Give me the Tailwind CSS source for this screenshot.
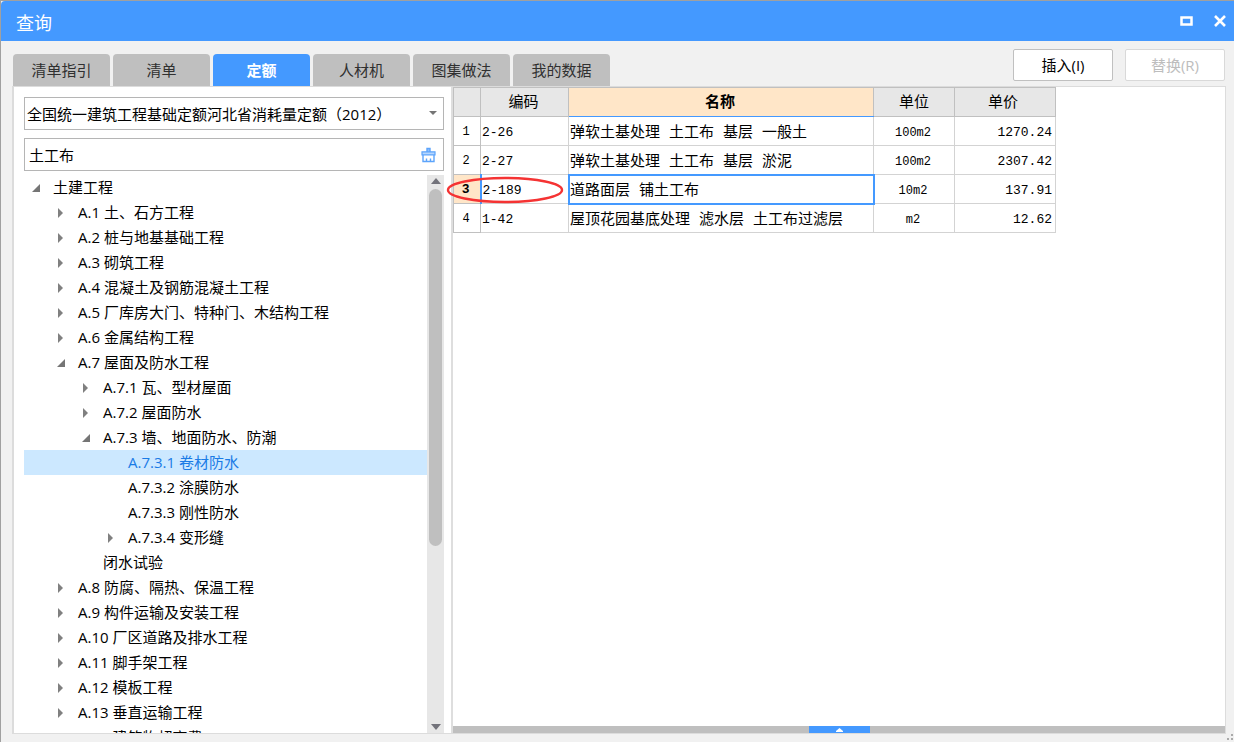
<!DOCTYPE html>
<html lang="zh-CN">
<head>
<meta charset="utf-8">
<title>查询</title>
<script src="https://cdn.jsdelivr.net/npm/@tailwindcss/browser@4"></script>
</head>
<body class="flex h-screen flex-col overflow-hidden border-t border-l border-[#a0a0a0] bg-[#f1f1f1] font-['Open_Sans','Noto_Sans_CJK_SC',sans-serif] text-[15px] leading-6 text-black">
<header class="flex h-10 shrink-0 items-center rounded-tl bg-[#4499ff] pr-1 pl-[15px] text-white">
  <h1 class="flex-1 pt-1 text-lg">查询</h1>
  <button aria-label="最大化" class="p-1"><svg class="block" width="14" height="10" viewBox="0 0 14 10"><path d="M1.500 1.500h10v7h-10z" fill="none" stroke="#fff" stroke-width="2.500"/></svg></button>
  <button aria-label="关闭" class="ml-3 p-1"><svg class="block" width="12" height="12" viewBox="0 0 12 12"><path d="M1 1l10 10M11 1L1 11" fill="none" stroke="#fff" stroke-width="2.600"/></svg></button>
</header>

<div class="flex shrink-0 items-end pt-2 pr-[9px] pl-3">
  <div role="tablist" class="flex flex-1 gap-[3px] text-[#303030]">
    <button role="tab" class="h-8 w-[97px] rounded-t-sm bg-[#bfbfbf]">清单指引</button>
    <button role="tab" class="h-8 w-[97px] rounded-t-sm bg-[#bfbfbf]">清单</button>
    <button role="tab" aria-selected="true" class="h-8 w-[97px] rounded-t-sm bg-[#4499ff] font-bold text-white">定额</button>
    <button role="tab" class="h-8 w-[97px] rounded-t-sm bg-[#bfbfbf]">人材机</button>
    <button role="tab" class="h-8 w-[97px] rounded-t-sm bg-[#bfbfbf]">图集做法</button>
    <button role="tab" class="h-8 w-[97px] rounded-t-sm bg-[#bfbfbf]">我的数据</button>
  </div>
  <div class="mb-[5px] flex gap-3">
    <button class="h-8 w-[100px] rounded-xs border border-[#c0c0c0] bg-white">插入(I)</button>
    <button disabled class="h-8 w-[100px] rounded-xs border border-[#d9d9d9] bg-white text-[#bdbdbd]">替换(R)</button>
  </div>
</div>

<main class="mr-2 mb-2 ml-[11px] flex min-h-0 flex-1 border border-l-2 border-[#dcdcdc] bg-white">
  <section class="flex w-[439px] shrink-0 flex-col border-r-2 border-[#dedede] pt-[10px] pr-[7px] pl-[10px]">
    <div class="relative shrink-0">
      <select aria-label="定额库" class="h-[33px] w-full appearance-none border border-[#b5b5b5] bg-white pt-px pl-[2px]">
        <option>全国统一建筑工程基础定额河北省消耗量定额（2012）</option>
      </select>
      <svg class="pointer-events-none absolute top-[14px] right-[7px]" width="8" height="4" viewBox="0 0 8 4"><path d="M0 0h8L4 4z" fill="#757575"/></svg>
    </div>
    <div class="mt-2 flex h-[33px] shrink-0 items-center border border-[#b5b5b5] pr-[7px]">
      <input aria-label="搜索" value="土工布" class="h-full min-w-0 flex-1 pl-1 outline-none">
      <button aria-label="清除"><svg class="block" width="15" height="16" viewBox="0 0 15 16" fill="none" stroke="#5ca4fb"><path d="M6 5V1.500h3V5" fill="#8fc0ff" stroke-width="1.400"/><path d="M1 4.800h13v3H1z" fill="#b5d6ff" stroke-width="1.200"/><path d="M2 8v6.500h11V8M5.500 14v-2.500M9.500 14v-2.500" stroke-width="1.400"/></svg></button>
    </div>
    <div class="mt-1 flex min-h-0 flex-1">
      <ul role="tree" id="tree" class="min-w-0 flex-1 overflow-hidden whitespace-nowrap"></ul>
      <div class="flex w-[17px] shrink-0 flex-col items-center bg-[#e7e7e7]">
        <svg class="mt-[3px] mb-1 shrink-0" width="10" height="6" viewBox="0 0 10 6"><path d="M0 6h10L5 0z" fill="#73737b"/></svg>
        <div class="mt-px h-[64%] w-[13px] rounded-full bg-[#bfbfbf]"></div>
        <svg class="mt-auto mb-[3px] shrink-0" width="10" height="6" viewBox="0 0 10 6"><path d="M0 0h10L5 6z" fill="#73737b"/></svg>
      </div>
    </div>
  </section>

  <section class="flex min-w-0 flex-1 flex-col">
    <div class="relative flex-1">
      <table class="w-[602px] table-fixed border-collapse font-['Liberation_Mono','Noto_Sans_CJK_SC',monospace] leading-5">
        <colgroup><col class="w-[27px]"><col class="w-[88px]"><col class="w-[305px]"><col class="w-[81px]"><col class="w-[101px]"></colgroup>
        <thead>
          <tr class="h-[29px] bg-[#e7e7e7]">
            <th class="border border-[#c0c0c0]"></th>
            <th class="border border-[#c0c0c0] pt-1 pr-[2px] font-normal">编码</th>
            <th class="border border-[#c0c0c0] border-b-[#4499ff] bg-[#ffe6c8] pt-1 pr-[2px] font-bold">名称</th>
            <th class="border border-[#c0c0c0] pt-1 font-normal">单位</th>
            <th class="border border-[#c0c0c0] pt-1 pr-1 font-normal">单价</th>
          </tr>
        </thead>
        <tbody>
          <tr class="h-[29px]">
            <td class="border border-[#c0c0c0] pt-px pr-[2px] text-center text-xs">1</td>
            <td class="border border-[#d3d3d3] pt-[3px] pl-px text-[13px]">2-26</td>
            <td class="border border-[#d3d3d3] pt-[5px] pl-px whitespace-nowrap">弹软土基处理 土工布 基层 一般土</td>
            <td class="border border-[#d3d3d3] pt-[3px] pr-[2px] text-center text-xs">100m2</td>
            <td class="border border-[#d3d3d3] pt-[3px] pr-[3px] text-right text-[13px]">1270.24</td>
          </tr>
          <tr class="h-[29px]">
            <td class="border border-[#c0c0c0] pt-px pr-[2px] text-center text-xs">2</td>
            <td class="border border-[#d3d3d3] pt-[3px] pl-px text-[13px]">2-27</td>
            <td class="border border-[#d3d3d3] pt-[5px] pl-px whitespace-nowrap">弹软土基处理 土工布 基层 淤泥</td>
            <td class="border border-[#d3d3d3] pt-[3px] pr-[2px] text-center text-xs">100m2</td>
            <td class="border border-[#d3d3d3] pt-[3px] pr-[3px] text-right text-[13px]">2307.42</td>
          </tr>
          <tr class="h-[29px]">
            <td class="border border-r-2 border-[#c0c0c0] border-r-[#4499ff] bg-[#ffe6c8] pt-px pr-[2px] text-center text-[13px] font-bold">3</td>
            <td class="border border-[#d3d3d3] pt-[3px] pl-px text-[13px]">2-189</td>
            <td class="border border-[#d3d3d3] pt-[5px] pl-px whitespace-nowrap outline-2 -outline-offset-1 outline-[#4499ff]">道路面层 铺土工布</td>
            <td class="border border-[#d3d3d3] pt-[3px] pr-[2px] text-center text-xs">10m2</td>
            <td class="border border-[#d3d3d3] pt-[3px] pr-[3px] text-right text-[13px]">137.91</td>
          </tr>
          <tr class="h-[29px]">
            <td class="border border-[#c0c0c0] pt-px pr-[2px] text-center text-xs">4</td>
            <td class="border border-[#d3d3d3] pt-[3px] pl-px text-[13px]">1-42</td>
            <td class="border border-[#d3d3d3] pt-[5px] pl-px whitespace-nowrap">屋顶花园基底处理 滤水层 土工布过滤层</td>
            <td class="border border-[#d3d3d3] pt-[3px] pr-[2px] text-center text-xs">m2</td>
            <td class="border border-[#d3d3d3] pt-[3px] pr-[3px] text-right text-[13px]">12.62</td>
          </tr>
        </tbody>
      </table>
      <svg class="pointer-events-none absolute top-[89px] -left-[7px]" width="118" height="28" viewBox="0 0 118 28"><ellipse cx="59" cy="14" rx="57" ry="12" fill="none" stroke="#f53333" stroke-width="2.400"/></svg>
    </div>
    <div class="flex h-[7px] shrink-0 justify-center bg-[#bfbfbf]">
      <button aria-label="展开" class="flex w-[61px] items-center justify-center bg-[#4499ff]"><svg class="block" width="7" height="4" viewBox="0 0 7 4"><path d="M0 4h7v-1L3.500 0 0 3z" fill="#fff"/></svg></button>
    </div>
  </section>
</main>
<svg class="absolute right-0 bottom-0" width="8" height="9" viewBox="0 0 8 9" fill="#aaa"><path d="M5 1h2v2H5zM1 5h2v2H1zM5 5h2v2H5z"/></svg>

<script>
const levels = ['pl-[29px]', 'pl-[54px]', 'pl-[79px]', 'pl-[104px]'];
const rows = [
  [0, 'open', '土建工程'],
  [1, 'closed', 'A.1 土、石方工程'],
  [1, 'closed', 'A.2 桩与地基基础工程'],
  [1, 'closed', 'A.3 砌筑工程'],
  [1, 'closed', 'A.4 混凝土及钢筋混凝土工程'],
  [1, 'closed', 'A.5 厂库房大门、特种门、木结构工程'],
  [1, 'closed', 'A.6 金属结构工程'],
  [1, 'open', 'A.7 屋面及防水工程'],
  [2, 'closed', 'A.7.1 瓦、型材屋面'],
  [2, 'closed', 'A.7.2 屋面防水'],
  [2, 'open', 'A.7.3 墙、地面防水、防潮'],
  [3, 'leaf', 'A.7.3.1 卷材防水', true],
  [3, 'leaf', 'A.7.3.2 涂膜防水'],
  [3, 'leaf', 'A.7.3.3 刚性防水'],
  [3, 'closed', 'A.7.3.4 变形缝'],
  [2, 'leaf', '闭水试验'],
  [1, 'closed', 'A.8 防腐、隔热、保温工程'],
  [1, 'closed', 'A.9 构件运输及安装工程'],
  [1, 'closed', 'A.10 厂区道路及排水工程'],
  [1, 'closed', 'A.11 脚手架工程'],
  [1, 'closed', 'A.12 模板工程'],
  [1, 'closed', 'A.13 垂直运输工程'],
  [1, 'closed', 'A.14 建筑物超高费']
];
const arrows = {
  open: '<path d="M11 2v8H3z" fill="#757575"/>',
  closed: '<path d="M4 1l5 5-5 5z" fill="#808080"/>',
  leaf: ''
};
// The arrow column sits to the left of each label.
document.getElementById('tree').innerHTML = rows.map(([level, state, label, selected]) =>
  `<li role="treeitem" aria-level="${level + 1}" class="flex h-[25px] items-center ${levels[level]} ${selected ? 'bg-[#cce8ff] text-[#1a7be6]' : ''}"><svg class="-ml-6 mr-3 shrink-0" width="12" height="12" viewBox="0 0 12 12">${arrows[state]}</svg><span class="pb-[2px]">${label}</span></li>`
).join('');
</script>
</body>
</html>
